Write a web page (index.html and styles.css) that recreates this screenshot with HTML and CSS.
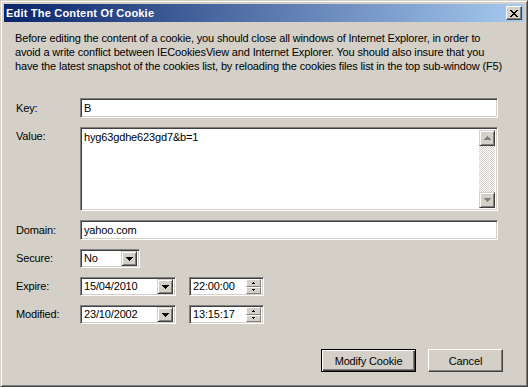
FILE: index.html
```html
<!DOCTYPE html>
<html>
<head>
<meta charset="utf-8">
<link rel="stylesheet" href="styles.css">
</head>
<body>
<div class="window">
  <div class="titlebar">
    <span class="title">Edit The Content Of Cookie</span>
    <span class="close"><svg width="8" height="7" viewBox="0 0 8 7" shape-rendering="crispEdges"><path d="M0 0h2v1H0zM6 0h2v1H6zM1 1h2v1H1zM5 1h2v1H5zM2 2h4v1H2zM3 3h2v1H3zM2 4h4v1H2zM1 5h2v1H1zM5 5h2v1H5zM0 6h2v1H0zM6 6h2v1H6z" fill="#000"/></svg></span>
  </div>
  <div class="content">
    <p class="intro">Before editing the content of a cookie, you should close all windows of Internet Explorer, in order to<br>avoid a write conflict between IECookiesView and Internet Explorer. You should also insure that you<br>have the latest snapshot of the cookies list, by reloading the cookies files list in the top sub-window (F5)</p>
    <div class="form">
      <span class="lbl">Key:</span>
      <div class="edit"><span class="txt">B</span></div>

      <span class="lbl lbl-top">Value:</span>
      <div class="edit memo">
        <span class="txt memo-txt">hyg63gdhe623gd7&amp;b=1</span>
        <div class="vscroll">
          <span class="sbtn"><svg width="7" height="4" viewBox="0 0 7 4" shape-rendering="crispEdges"><path d="M3 0h1v1H3zM2 1h3v1H2zM1 2h5v1H1zM0 3h7v1H0z" fill="#808080"/></svg></span>
          <span class="track"></span>
          <span class="sbtn"><svg width="7" height="4" viewBox="0 0 7 4" shape-rendering="crispEdges"><path d="M0 0h7v1H0zM1 1h5v1H1zM2 2h3v1H2zM3 3h1v1H3z" fill="#808080"/></svg></span>
        </div>
      </div>

      <span class="lbl">Domain:</span>
      <div class="edit"><span class="txt">yahoo.com</span></div>

      <span class="lbl">Secure:</span>
      <div class="line">
        <div class="edit combo secure"><span class="txt">No</span><span class="drop"><svg width="7" height="4" viewBox="0 0 7 4" shape-rendering="crispEdges"><path d="M0 0h7v1H0zM1 1h5v1H1zM2 2h3v1H2zM3 3h1v1H3z" fill="#000"/></svg></span></div>
      </div>

      <span class="lbl">Expire:</span>
      <div class="line">
        <div class="edit combo date"><span class="txt">15/04/2010</span><span class="drop"><svg width="7" height="4" viewBox="0 0 7 4" shape-rendering="crispEdges"><path d="M0 0h7v1H0zM1 1h5v1H1zM2 2h3v1H2zM3 3h1v1H3z" fill="#000"/></svg></span></div>
        <div class="edit time"><span class="txt">22:00:00</span>
          <span class="spin">
            <span class="spbtn"><svg width="3" height="2" viewBox="0 0 3 2" shape-rendering="crispEdges"><path d="M1 0h1v1H1zM0 1h3v1H0z" fill="#000"/></svg></span>
            <span class="spbtn"><svg width="3" height="2" viewBox="0 0 3 2" shape-rendering="crispEdges"><path d="M0 0h3v1H0zM1 1h1v1H1z" fill="#000"/></svg></span>
          </span>
        </div>
      </div>

      <span class="lbl">Modified:</span>
      <div class="line">
        <div class="edit combo date"><span class="txt">23/10/2002</span><span class="drop"><svg width="7" height="4" viewBox="0 0 7 4" shape-rendering="crispEdges"><path d="M0 0h7v1H0zM1 1h5v1H1zM2 2h3v1H2zM3 3h1v1H3z" fill="#000"/></svg></span></div>
        <div class="edit time"><span class="txt">13:15:17</span>
          <span class="spin">
            <span class="spbtn"><svg width="3" height="2" viewBox="0 0 3 2" shape-rendering="crispEdges"><path d="M1 0h1v1H1zM0 1h3v1H0z" fill="#000"/></svg></span>
            <span class="spbtn"><svg width="3" height="2" viewBox="0 0 3 2" shape-rendering="crispEdges"><path d="M0 0h3v1H0zM1 1h1v1H1z" fill="#000"/></svg></span>
          </span>
        </div>
      </div>
    </div>
    <div class="buttons">
      <button class="btn default">Modify Cookie</button>
      <button class="btn cancel">Cancel</button>
    </div>
  </div>
</div>
</body>
</html>
```

FILE: styles.css
```css
html, body {
  margin: 0;
  padding: 0;
  background: #d4d0c8;
}

body {
  font-family: "Liberation Sans", Arial, sans-serif;
  font-size: 11px;
  letter-spacing: -0.15px;
  color: #000;
}

.window {
  width: 528px;
  height: 387px;
  box-sizing: border-box;
  background: #d4d0c8;
  border: 1px solid;
  border-color: #d4d0c8 #404040 #404040 #d4d0c8;
  box-shadow: inset 1px 1px #fff, inset -1px -1px #808080;
  padding: 3px;
  display: flex;
  flex-direction: column;
}

.titlebar {
  height: 18px;
  flex: none;
  display: flex;
  align-items: center;
  justify-content: space-between;
  padding: 0 2px 0 2px;
  background: linear-gradient(to right, #0a246a, #a6caf0);
  color: #fff;
}

.title {
  font-weight: bold;
  font-size: 11px;
  letter-spacing: 0.2px;
  line-height: 13px;
}

.close {
  width: 16px;
  height: 14px;
  box-sizing: border-box;
  background: #d4d0c8;
  border: 1px solid;
  border-color: #fff #404040 #404040 #fff;
  box-shadow: inset -1px -1px #808080;
  display: flex;
  align-items: center;
  justify-content: center;
  padding-left: 0;
}

.close svg { display: block; }

.content {
  flex: 1;
  display: flex;
  flex-direction: column;
}

.intro {
  margin: 9px 0 0 11px;
  line-height: 14px;
  white-space: nowrap;
}

.form {
  margin: 25px 0 0 12px;
  display: grid;
  grid-template-columns: 64px 418px;
  grid-template-rows: 20px 84px 20px 19px 19px 19px;
  row-gap: 9px;
}

.lbl {
  align-self: center;
  line-height: 13px;
}

.lbl-top {
  align-self: start;
  padding-top: 3px;
}

.edit {
  box-sizing: border-box;
  background: #fff;
  border: 1px solid;
  border-color: #808080 #fff #fff #808080;
  box-shadow: inset 1px 1px #404040, inset -1px -1px #d4d0c8;
  display: flex;
  align-items: center;
  padding: 2px;
  height: 100%;
}

.txt {
  padding-left: 1px;
  line-height: 13px;
  flex: 1;
  white-space: nowrap;
}

.memo {
  align-items: stretch;
}

.memo-txt {
  align-self: flex-start;
  padding-top: 1px;
}

.vscroll {
  width: 16px;
  display: flex;
  flex-direction: column;
}

.sbtn {
  width: 16px;
  height: 16px;
  box-sizing: border-box;
  background: #d4d0c8;
  border: 1px solid;
  border-color: #d4d0c8 #404040 #404040 #d4d0c8;
  box-shadow: inset 1px 1px #fff, inset -1px -1px #808080;
  display: flex;
  align-items: center;
  justify-content: center;
  flex: none;
}

.sbtn svg { display: block; }

.track {
  flex: 1;
  background: repeating-conic-gradient(#d4d0c8 0 25%, #fff 0 50%) 0 0 / 2px 2px;
}

.line {
  display: flex;
  gap: 13px;
  align-items: stretch;
}

.combo {
  padding-right: 2px;
}

.secure { width: 60px; }
.date { width: 96px; }
.time { width: 75px; }

.drop {
  width: 16px;
  height: 15px;
  box-sizing: border-box;
  flex: none;
  background: #d4d0c8;
  border: 1px solid;
  border-color: #d4d0c8 #404040 #404040 #d4d0c8;
  box-shadow: inset 1px 1px #fff, inset -1px -1px #808080;
  display: flex;
  align-items: center;
  justify-content: center;
}

.drop svg { display: block; }

.spin {
  width: 15px;
  height: 15px;
  flex: none;
  display: flex;
  flex-direction: column;
}

.spbtn {
  flex: 1;
  box-sizing: border-box;
  background: #d4d0c8;
  border: 1px solid;
  border-color: #fff #808080 #808080 #fff;
  display: flex;
  align-items: center;
  justify-content: center;
}

.spbtn svg { display: block; }

.buttons {
  margin-top: 25px;
  padding-right: 21px;
  display: flex;
  justify-content: flex-end;
  gap: 12px;
}

.btn {
  font-family: "Liberation Sans", Arial, sans-serif;
  font-size: 11px;
  letter-spacing: -0.15px;
  color: #000;
  height: 23px;
  box-sizing: border-box;
  background: #d4d0c8;
  border: 1px solid;
  border-color: #fff #404040 #404040 #fff;
  box-shadow: inset -1px -1px #808080;
  padding: 0;
  margin: 0;
  border-radius: 0;
}

.btn.default {
  width: 95px;
  border: 1px solid #000;
  box-shadow: inset 1px 1px #fff, inset -1px -1px #404040, inset -2px -2px #808080;
}

.btn.cancel {
  width: 75px;
}
```
